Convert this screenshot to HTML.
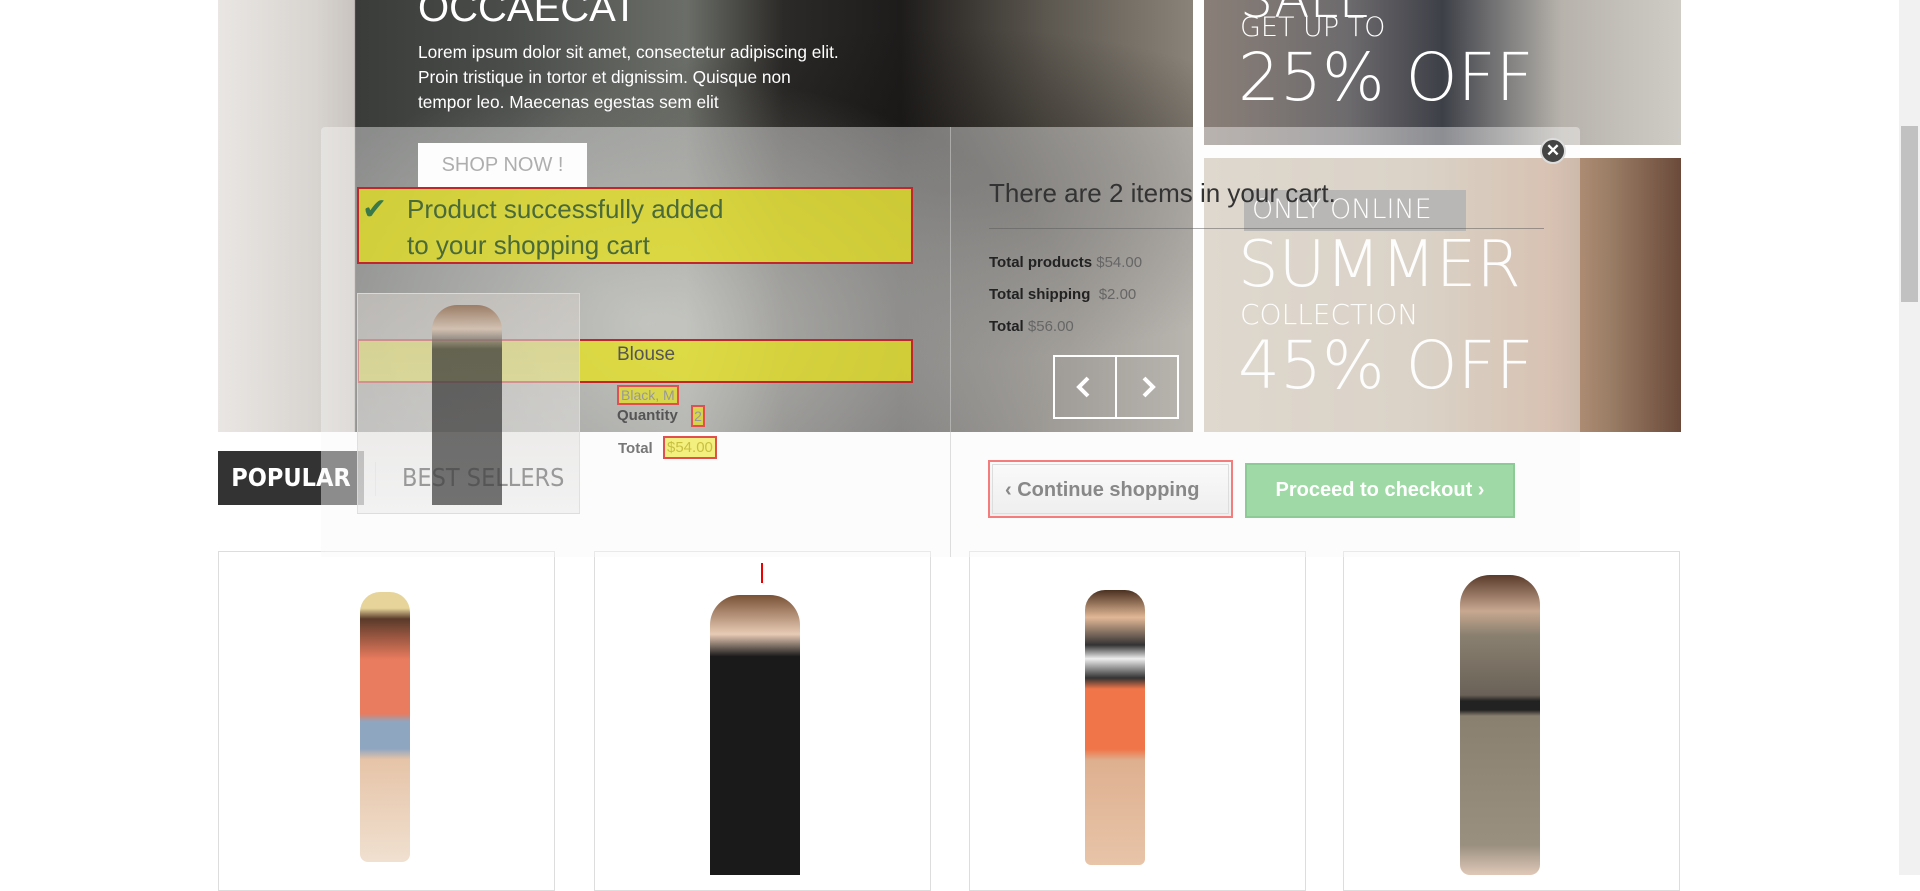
<!DOCTYPE html>
<html><head><meta charset="utf-8"><style>
*{margin:0;padding:0;box-sizing:border-box}
body{width:1920px;height:875px;overflow:hidden;background:#fff;font-family:"Liberation Sans",Arial,sans-serif;position:relative}
.abs{position:absolute}
.hero{left:218px;top:0;width:975px;height:432px;background:linear-gradient(90deg,#e9e6e3 0,#d8d4d0 10%,#c9c4bf 14%,#3a3c3a 14.1%,#4a4d4a 30%,#6b6e68 48%,#2c2a28 58%,#1e1c1b 70%,#5c574f 85%,#8a8379 100%)}
.hero2{left:355px;top:0;width:838px;height:432px;background:radial-gradient(ellipse at 35% 75%,rgba(200,200,190,.55),rgba(0,0,0,0) 55%),radial-gradient(ellipse at 70% 45%,rgba(20,18,16,.6),rgba(0,0,0,0) 50%)}
.b1{left:1204px;top:0;width:477px;height:145px;background:linear-gradient(90deg,#8a7f78 0,#6d6b6d 30%,#3e4048 50%,#b7b3ac 75%,#cfccc6 100%)}
.b2{left:1204px;top:158px;width:477px;height:274px;background:linear-gradient(90deg,#cbbfae 0,#c4b6a3 45%,#bfa58c 62%,#c09a80 72%,#9b7e66 85%,#6b4a3a 100%)}
.wt{color:#fff;font-family:"DejaVu Sans","Liberation Sans",sans-serif;font-weight:300;white-space:nowrap}
.modal{left:321px;top:127px;width:1259px;height:305px;background:rgba(250,250,250,.42);border-radius:4px 4px 0 0}
.card{border:1px solid #ddd;background:#fff;top:551px;width:337px;height:340px}
.yel{background:rgba(230,225,30,.75);border:2px solid #c0262b}
.scroll{left:1899px;top:0;width:21px;height:875px;background:#f1f1f1}
</style></head><body>

<div class="abs hero"></div>
<div class="abs hero2"></div>
<div class="abs" style="left:418px;top:-14px;color:#fff;font-size:40px;">OCCAECAT</div>
<div class="abs" style="left:418px;top:40px;color:#fff;font-size:17.3px;line-height:25px;width:428px">Lorem ipsum dolor sit amet, consectetur adipiscing elit. Proin tristique in tortor et dignissim. Quisque non tempor leo. Maecenas egestas sem elit</div>
<div class="abs" style="left:418px;top:143px;width:169px;height:44px;background:#fff;color:#777;font-size:20px;line-height:44px;text-align:center">SHOP NOW !</div>

<div class="abs b1"></div>
<div class="abs wt" style="left:1240px;top:-30px;font-size:52px">SALE</div>
<div class="abs wt" style="left:1240px;top:12px;font-size:27px">GET UP TO</div>
<div class="abs wt" style="left:1238px;top:38px;font-size:66px;line-height:80px">25% OFF</div>
<div class="abs b2"></div>
<div class="abs" style="left:1244px;top:190px;width:222px;height:41px;background:#8a8783"></div>
<div class="abs wt" style="left:1252px;top:194px;font-size:27px">ONLY ONLINE</div>
<div class="abs wt" style="left:1238px;top:230px;font-size:64px;line-height:70px">SUMMER</div>
<div class="abs wt" style="left:1240px;top:298px;font-size:28px">COLLECTION</div>
<div class="abs wt" style="left:1238px;top:326px;font-size:66px;line-height:80px">45% OFF</div>

<div class="abs" style="left:218px;top:451px;width:146px;height:54px;background:#333;color:#fff;font-size:25px;font-weight:bold;line-height:54px;text-align:center;font-family:'DejaVu Sans Condensed','Liberation Sans',sans-serif">POPULAR</div>
<div class="abs" style="left:375px;top:462px;width:1px;height:34px;background:#ddd"></div>

<div class="abs card" style="left:218px"></div>
<div class="abs card" style="left:594px"></div>
<div class="abs card" style="left:969px"></div>
<div class="abs card" style="left:1343px"></div>
<div class="abs" style="left:360px;top:592px;width:50px;height:270px;background:linear-gradient(#e6d49a 0,#e6d49a 6%,#5a3a2a 10%,#e97b5e 25%,#e97b5e 45%,#8fa6c0 48%,#8fa6c0 58%,#e6c4a8 62%,#f0e0d0 100%);border-radius:20px 20px 8px 8px"></div>
<div class="abs" style="left:710px;top:595px;width:90px;height:280px;background:linear-gradient(#7a5236 0,#e8cbb5 14%,#1a1a1a 22%,#1a1a1a 100%);border-radius:30px 30px 0 0"></div>
<div class="abs" style="left:1085px;top:590px;width:60px;height:275px;background:linear-gradient(#4a3020 0,#e2b896 10%,#333 20%,#eee 25%,#333 32%,#f0764a 36%,#f0764a 58%,#deb090 62%,#e8c4a8 100%);border-radius:20px 20px 6px 6px"></div>
<div class="abs" style="left:1460px;top:575px;width:80px;height:300px;background:linear-gradient(#5a3c2c 0,#c8a890 12%,#8a8070 20%,#6a6258 40%,#222 42%,#222 45%,#8a8070 47%,#9a9080 90%,#e0c8b8 100%);border-radius:30px 30px 10px 10px"></div>
<div class="abs" style="left:761px;top:563px;width:2px;height:20px;background:#e00"></div>

<div class="abs scroll"></div>
<div class="abs" style="left:1901px;top:126px;width:17px;height:176px;background:#c1c1c1"></div>

<!-- modal -->
<div class="abs modal"></div>
<div class="abs" style="left:321px;top:432px;width:1259px;height:125px;background:rgba(248,248,248,.45)"></div>
<div class="abs" style="left:950px;top:127px;width:1px;height:430px;background:rgba(200,200,200,.6)"></div>
<div class="abs" style="left:1540px;top:138px;width:26px;height:26px;border-radius:50%;background:#444;border:2px solid #ddd;color:#fff;font-size:17px;font-weight:bold;text-align:center;line-height:21px">✕</div>

<div class="abs yel" style="left:357px;top:187px;width:556px;height:77px"></div>
<div class="abs" style="left:362px;top:192px;color:#3a7a4a;font-size:30px">✔</div>
<div class="abs" style="left:407px;top:191px;color:#4a6a3a;font-size:26px;line-height:36px">Product successfully added<br>to your shopping cart</div>

<div class="abs yel" style="left:357px;top:339px;width:556px;height:44px"></div>
<div class="abs" style="left:357px;top:293px;width:223px;height:221px;border:1px solid rgba(220,220,220,.8);background:linear-gradient(rgba(210,205,200,.6),rgba(235,235,235,.6))"></div>
<div class="abs" style="left:402px;top:451px;color:#999;font-size:25px;line-height:54px;font-family:'DejaVu Sans Condensed','Liberation Sans',sans-serif">BEST SELLERS</div>
<div class="abs" style="left:432px;top:305px;width:70px;height:200px;background:linear-gradient(#8a6244 0,#d8c0ac 12%,#333 22%,#3a3a3a 100%);border-radius:25px 25px 0 0;opacity:.7"></div>
<div class="abs" style="left:617px;top:344px;color:#555;font-size:19px">Blouse</div>
<div class="abs" style="left:617px;top:385px;height:20px;padding:0 2px;border:2px solid #e05050;background:rgba(230,225,30,.7);color:#999;font-size:14px;line-height:16px">Black, M</div>
<div class="abs" style="left:617px;top:407px;color:#555;font-size:15px;font-weight:bold">Quantity</div>
<div class="abs" style="left:691px;top:405px;height:22px;width:14px;border:2px solid #e05050;background:rgba(230,225,30,.7);color:#999;font-size:14px;text-align:center;line-height:18px">2</div>
<div class="abs" style="left:618px;top:440px;color:#777;font-size:15px;font-weight:bold">Total</div>
<div class="abs" style="left:663px;top:436px;height:23px;padding:0 2px;border:2px solid #e05050;background:#f4f080;color:#c8c040;font-size:15px;line-height:19px">$54.00</div>

<div class="abs" style="left:989px;top:178px;color:#333;font-size:26px">There are 2 items in your cart.</div>
<div class="abs" style="left:989px;top:228px;width:555px;height:1px;background:rgba(90,90,90,.5)"></div>
<div class="abs" style="left:989px;top:247px;color:#222;font-size:15px;line-height:32px"><b>Total products</b> <span style="color:#666">$54.00</span><br><b>Total shipping</b>&nbsp; <span style="color:#666">$2.00</span><br><b>Total</b> <span style="color:#666">$56.00</span></div>
<div class="abs" style="left:1053px;top:355px;width:126px;height:64px;border:2px solid #fff"></div>
<div class="abs" style="left:1115px;top:355px;width:2px;height:64px;background:#fff"></div>
<svg class="abs" style="left:1074px;top:375px" width="20" height="24"><path d="M14 3L5 12l9 9" stroke="#fff" stroke-width="4" fill="none"/></svg>
<svg class="abs" style="left:1138px;top:375px" width="20" height="24"><path d="M6 3l9 9-9 9" stroke="#fff" stroke-width="4" fill="none"/></svg>

<div class="abs" style="left:988px;top:460px;width:245px;height:58px;border:2px solid #f47c7c;background:linear-gradient(#fafafa,#eee);padding:2px"><div style="border:1px solid #ddd;height:100%;color:#888;font-size:20px;font-weight:bold;line-height:50px;padding-left:12px">‹ Continue shopping</div></div>
<div class="abs" style="left:1245px;top:463px;width:270px;height:55px;background:#9fdaa6;border:2px solid #8ccb95;color:#fff;font-size:20px;font-weight:bold;line-height:51px;text-align:center">Proceed to checkout ›</div>

</body></html>
